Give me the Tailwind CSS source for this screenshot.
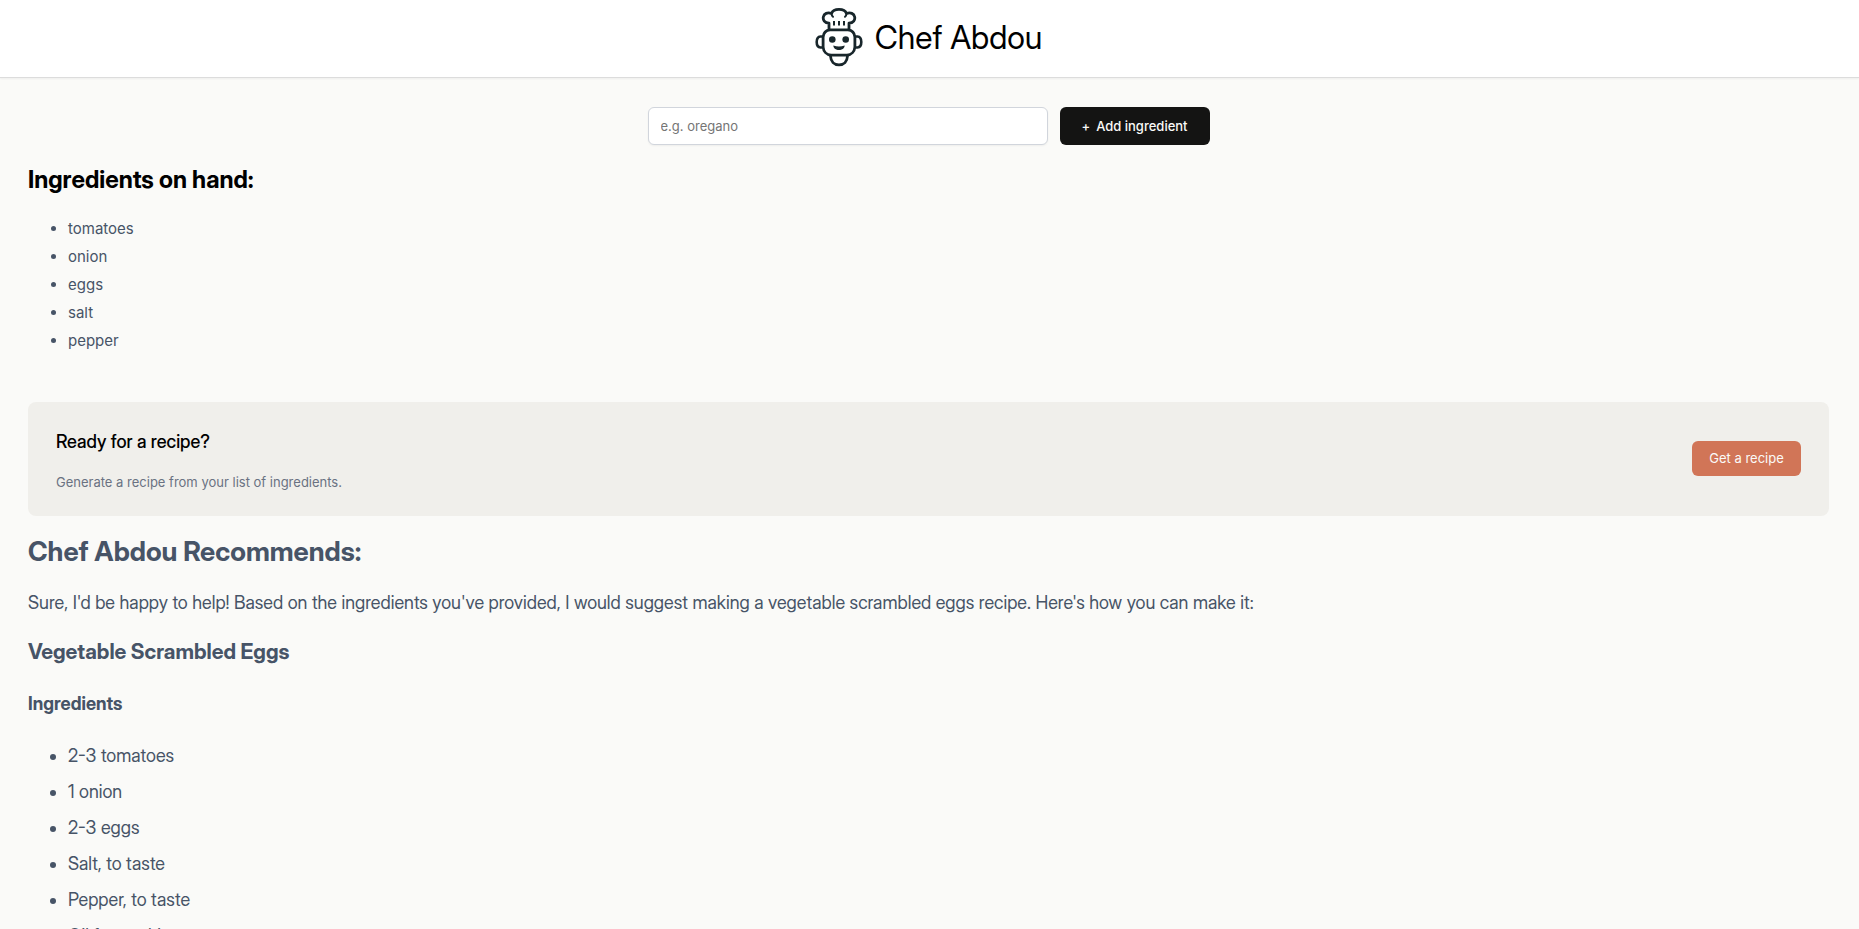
<!DOCTYPE html>
<html lang="en">
<head>
<meta charset="utf-8">
<title>Chef Abdou</title>
<script src="https://cdn.jsdelivr.net/npm/@tailwindcss/browser@4"></script>
</head>
<body class="h-screen overflow-hidden bg-[#fafaf8] font-['Inter_Display',Inter,sans-serif] text-black">
<header class="flex h-[78px] items-center justify-center gap-3 border-b border-[#dcdcdc] bg-white pr-0.5 pb-0.5 shadow-xs">
  <svg class="h-[60px] w-12" viewBox="0 0 48 60" fill="none" stroke="#18262b" stroke-width="2.8" stroke-linecap="round" stroke-linejoin="round" aria-hidden="true">
    <path d="M14 21.500V15.200C9.500 15.200 7.800 12 8.300 9C9 5.500 12.500 4 16.500 5.500C17.500 2.800 20.500 1.400 24 1.400S30.500 2.800 31.500 5.500C35.500 4 39 5.500 39.700 9C40.200 12 38.500 15.200 34 15.200V21.500"/>
    <path d="M16.500 5.500C16.500 7 17 8 18 8.800M31.500 5.500C31.500 7 31 8 30 8.800" stroke-width="2"/>
    <path d="M19 13V17.500M24 13V17.500M29 13V17.500" stroke-width="2" stroke-linecap="butt"/>
    <path d="M15 21.900H33C37 22.300 39.500 25 39.900 29V39C39.500 43.500 36.500 46.800 32 47.200H16C11.500 46.800 8.500 43.500 8.100 39V29C8.500 25 11 22.300 15 21.900Z"/>
    <path d="M7.500 28.500H5.500C3 28.700 1.700 31 1.700 34S3 39.300 5.500 39.500H7.500M40.500 28.500H42.500C45 28.700 46.300 31 46.300 34S45 39.300 42.500 39.500H40.500" stroke-width="2.600"/>
    <path d="M15.500 48C15.800 53.500 19 56.800 24 56.800S32.200 53.500 32.500 48"/>
    <g fill="#18262b" stroke="none"><circle cx="17.300" cy="31.500" r="3.300"/><circle cx="30.700" cy="31.500" r="3.300"/><path d="M18.300 37.500Q24 39.300 29.700 37.500C29.500 40.500 27 42 24 42S18.500 40.500 18.300 37.500Z"/></g>
  </svg>
  <h1 class="text-[32px]">Chef Abdou</h1>
</header>
<main class="pl-7 pr-[30px] pt-[29px]">
  <form class="flex justify-center gap-3 font-[Inter,sans-serif]">
    <input type="text" aria-label="Add ingredient" placeholder="e.g. oregano" class="h-[38px] w-[400px] rounded-md border border-gray-300 bg-white px-3 text-[13px] shadow-xs placeholder:text-[#757575]">
    <button type="button" class="flex h-[38px] w-[150px] items-center justify-center gap-1.5 rounded-md bg-[#141413] pt-0.5 text-[13px] font-medium text-[#fafaf8]"><span>+</span><span>Add ingredient</span></button>
  </form>
  <section>
    <h2 class="mt-[19px] text-2xl font-bold">Ingredients on hand:</h2>
    <ul class="mt-[19px] list-disc pl-10 font-[Inter,sans-serif] text-[15px] leading-7 text-[#475467]">
      <li>tomatoes</li>
      <li>onion</li>
      <li>eggs</li>
      <li>salt</li>
      <li>pepper</li>
    </ul>
    <div class="mt-[47px] flex items-center justify-between rounded-lg bg-[#f0efeb] px-7 pt-[26px] pb-6">
      <div>
        <h3 class="text-lg font-medium leading-7">Ready for a recipe?</h3>
        <p class="mt-4 font-[Inter,sans-serif] text-[13px] leading-5 text-gray-500">Generate a recipe from your list of ingredients.</p>
      </div>
      <button type="button" class="mb-1 h-[35px] w-[109px] rounded-md bg-[#d17557] font-[Inter,sans-serif] text-[13px] pt-0.5 text-[#fafaf8]">Get a recipe</button>
    </div>
  </section>
  <section class="text-lg text-[#475467]" aria-live="polite">
    <h2 class="mt-5 text-[27px] font-bold leading-8">Chef Abdou Recommends:</h2>
    <p class="mt-[21px]">Sure, I'd be happy to help! Based on the ingredients you've provided, I would suggest making a vegetable scrambled eggs recipe. Here's how you can make it:</p>
    <h3 class="mt-[19px] text-[21px] font-bold leading-8">Vegetable Scrambled Eggs</h3>
    <h4 class="mt-[22px] text-lg font-bold">Ingredients</h4>
    <ul class="mt-5 list-disc pl-10 leading-9">
      <li>2-3 tomatoes</li>
      <li>1 onion</li>
      <li>2-3 eggs</li>
      <li>Salt, to taste</li>
      <li>Pepper, to taste</li>
      <li>Oil for cooking</li>
    </ul>
  </section>
</main>
</body>
</html>
